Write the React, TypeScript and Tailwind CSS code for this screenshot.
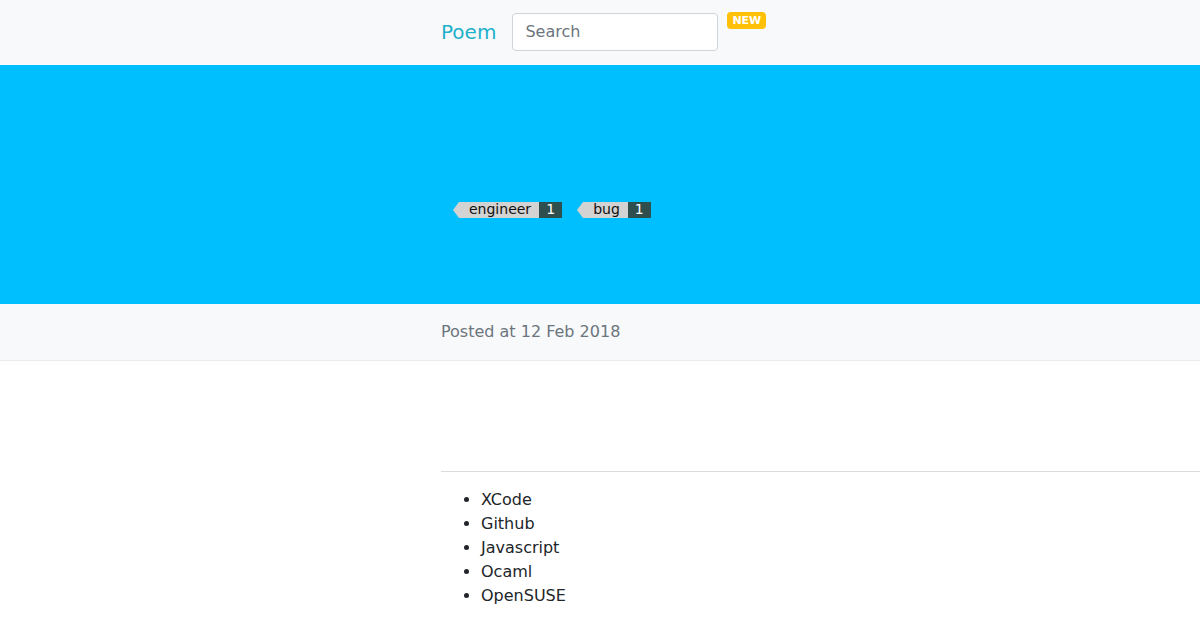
import React from 'react';

const tags = [
  { name: 'engineer', count: 1 },
  { name: 'bug', count: 1 },
];

const items = ['XCode', 'Github', 'Javascript', 'Ocaml', 'OpenSUSE'];

const Tag: React.FC<{ name: string; count: number }> = ({ name, count }) => (
  <a className="flex items-stretch h-4 text-[14px] leading-[15px]">
    <span className="w-0 h-0 border-y-8 border-y-transparent border-r-[6px] border-r-[#d3d3d3]" />
    <span className="bg-[#d3d3d3] text-[#111] pl-[10px] pr-2">{name}</span>
    <span className="bg-[#2f4f4f] text-white w-[23px] text-center">{count}</span>
  </a>
);

export default function App() {
  return (
    <div className="min-h-[630px] bg-white text-[#212529] font-['DejaVu_Sans',sans-serif]">
      <header className="h-[65px] bg-[#f8f9fa] flex items-center pl-[441px] pb-[2px]">
        <span className="text-[20px] text-[#1fb0cc] mr-4">Poem</span>
        <input
          type="text"
          placeholder="Search"
          className="w-[206px] h-[38px] bg-white border border-[#ced4da] rounded px-3 text-[16px] placeholder:text-[#6c757d] outline-none"
        />
        <span className="self-start mt-3 ml-[9px] bg-[#ffc107] text-white text-[11px] font-bold leading-[17px] px-[5px] rounded">
          NEW
        </span>
      </header>

      <section className="h-[239px] bg-[#00bfff] flex items-start pl-[453px] pt-[137px] gap-[15px]">
        {tags.map((t) => (
          <Tag key={t.name} name={t.name} count={t.count} />
        ))}
      </section>

      <div className="h-[57px] bg-[#f8f9fa] border-b border-[#e9ecef] flex items-center pl-[441px]">
        <span className="text-[16px] text-[#6c757d]">Posted at 12 Feb 2018</span>
      </div>

      <main className="pl-[441px] pt-[110px]">
        <hr className="border-t border-[#dcdcdc]" />
        <ul className="list-disc pl-10 mt-4 text-[16px] leading-6">
          {items.map((i) => (
            <li key={i}>{i}</li>
          ))}
        </ul>
      </main>
    </div>
  );
}
